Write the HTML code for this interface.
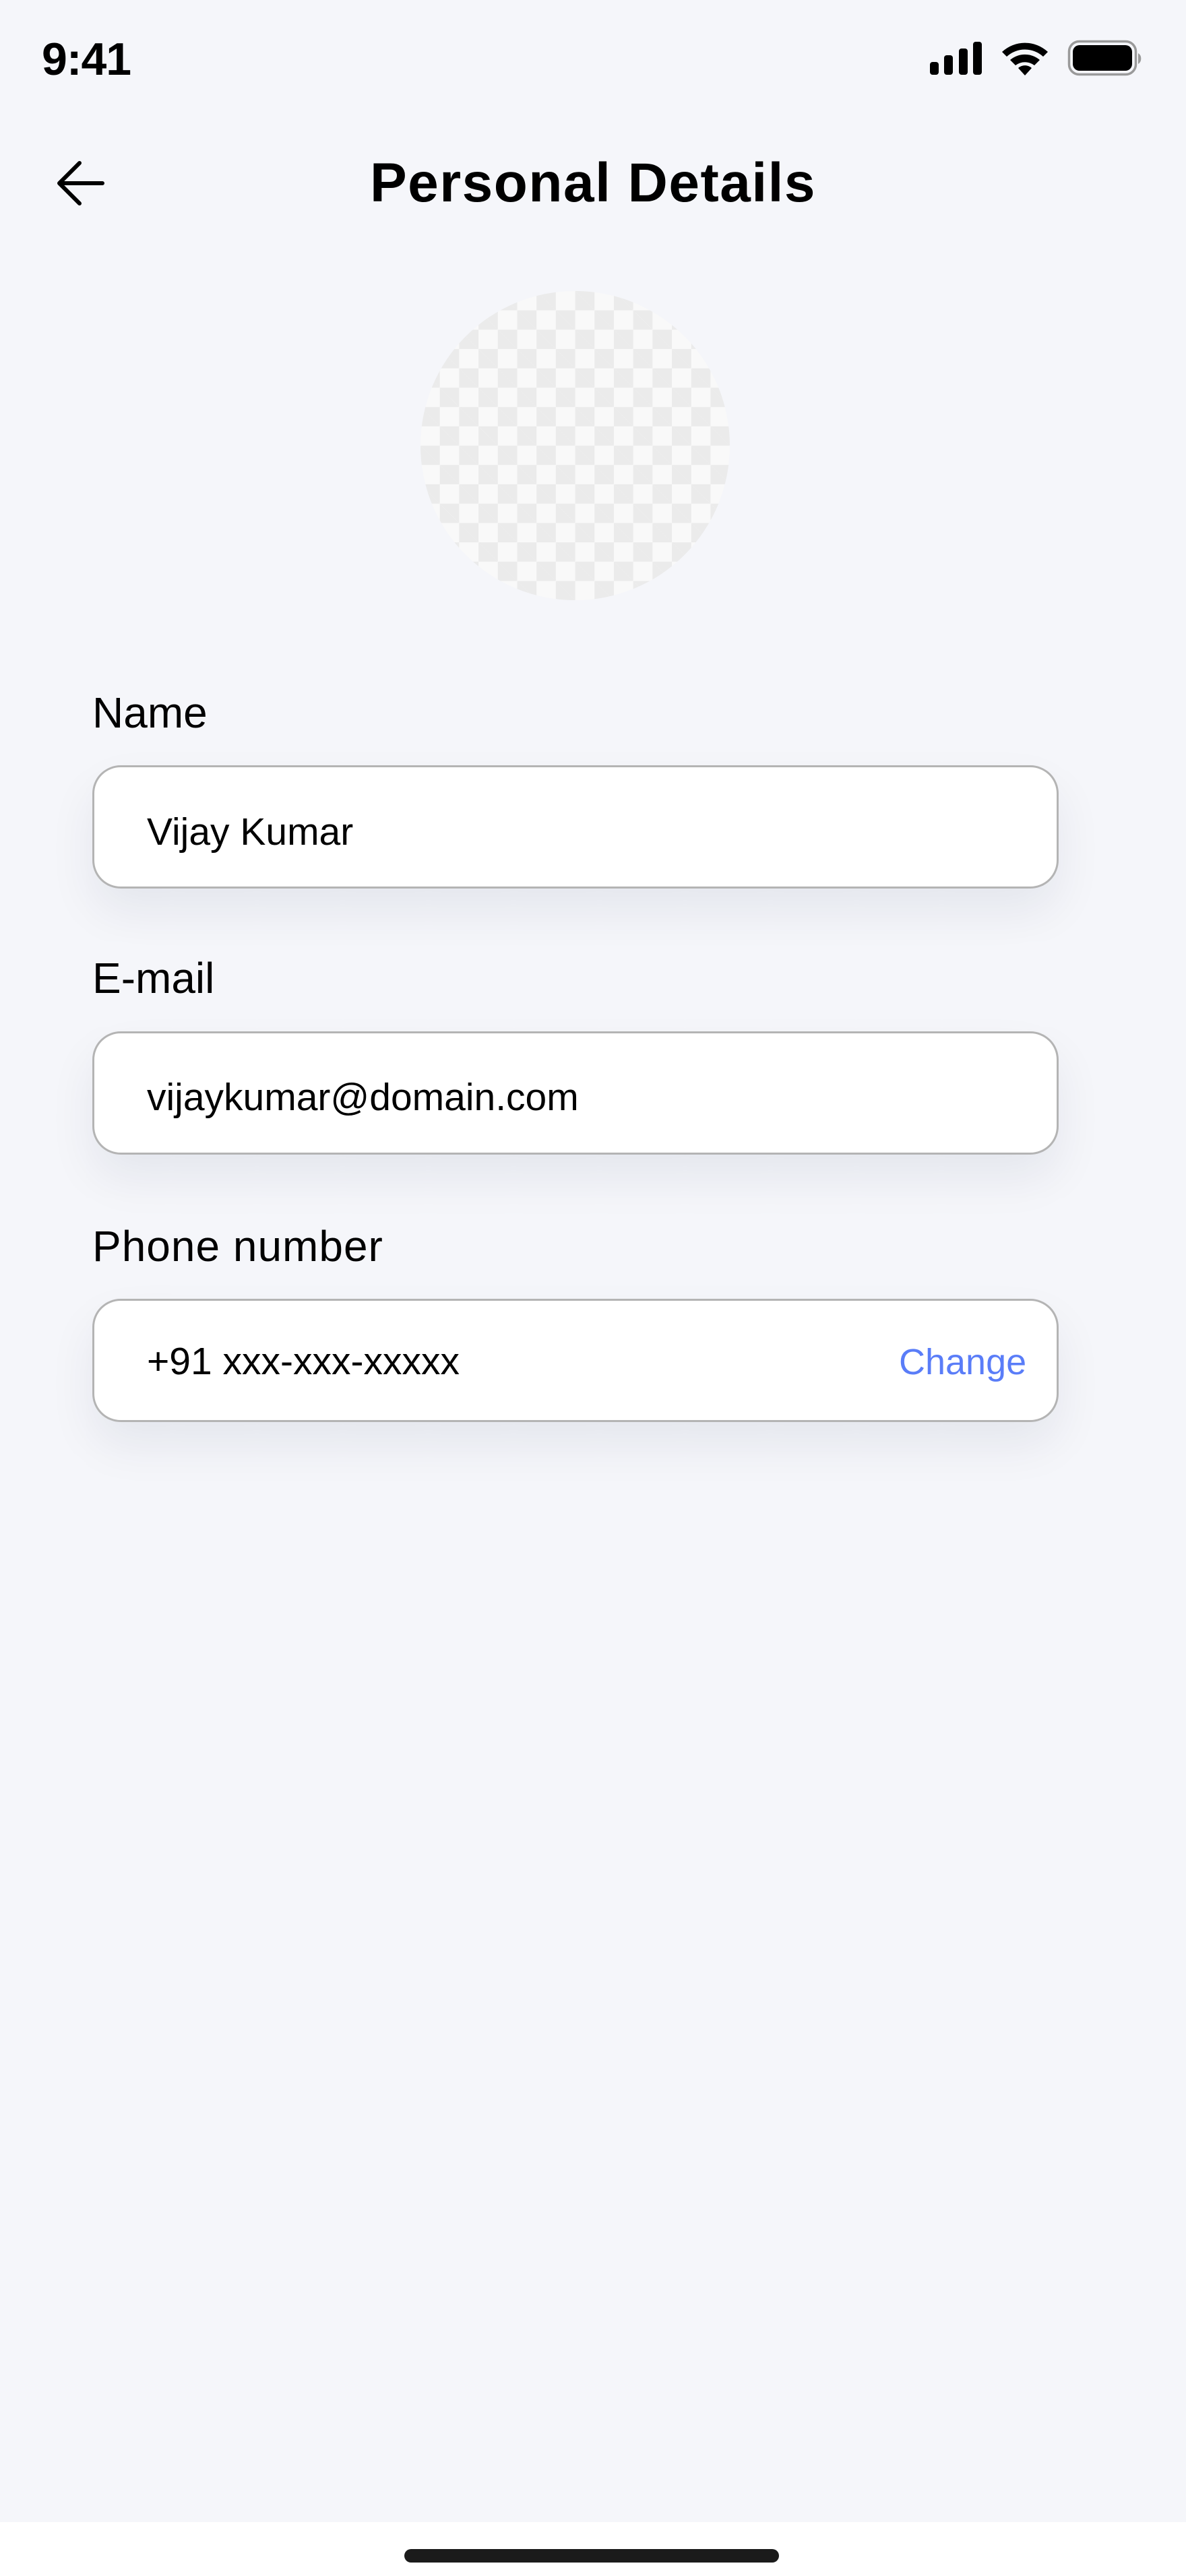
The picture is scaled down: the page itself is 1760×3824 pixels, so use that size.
<!DOCTYPE html>
<html><head><meta charset="utf-8"><style>
*{margin:0;padding:0;box-sizing:border-box}
html,body{width:1760px;height:3824px;overflow:hidden}
body{background:#f5f6fa;font-family:"Liberation Sans",sans-serif;color:#000;position:relative}
.a{position:absolute;line-height:1;white-space:nowrap}
.inp{position:absolute;left:137px;width:1434px;height:183px;background:#fff;border:3.5px solid #b4b4b4;border-radius:42px;box-shadow:0 34px 70px rgba(20,30,70,0.07)}
.lab{font-size:64px;left:137px}
.val{font-size:57px;left:218px}
.av{position:absolute;left:624px;top:432px;width:459px;height:459px;border-radius:50%;overflow:hidden;
background-color:#f9f9f9;
background-image:linear-gradient(45deg,#ebebeb 25%,transparent 25%,transparent 75%,#ebebeb 75%),linear-gradient(45deg,#ebebeb 25%,transparent 25%,transparent 75%,#ebebeb 75%);
background-size:57.4px 57.4px;background-position:28.7px 0,0 28.7px}
</style></head><body>
<div class="a" style="left:62px;top:54px;font-size:68px;font-weight:bold;letter-spacing:-1px">9:41</div>
<svg style="position:absolute;left:1375px;top:55px" width="330" height="65" viewBox="1375 55 330 65">
<rect x="1380" y="92" width="13" height="19" rx="4"/>
<rect x="1401" y="82" width="13" height="29" rx="4"/>
<rect x="1423" y="72" width="13" height="39" rx="4"/>
<rect x="1444" y="62" width="13" height="49" rx="4"/>
<path d="M1487 77 A50 50 0 0 1 1555 77 L1548 84 A40 40 0 0 0 1494 84 Z"/>
<path d="M1499 89 A34 34 0 0 1 1543 89 L1535 97 A23 23 0 0 0 1507 97 Z"/>
<path d="M1511 101 A15 15 0 0 1 1531 101 L1521 112 Z"/>
<rect x="1586.5" y="61.5" width="99" height="49" rx="15" fill="none" stroke="#9a9a9a" stroke-width="3.5"/>
<rect x="1592" y="67" width="88" height="38" rx="10"/>
<path d="M1689 79 A8 9 0 0 1 1689 95 Z" fill="#9a9a9a"/>
</svg>
<svg style="position:absolute;left:80px;top:236px" width="80" height="72" viewBox="80 236 80 72">
<path d="M152 272 H88 M118 242 L88 272 L118 302" fill="none" stroke="#000" stroke-width="6" stroke-linecap="round" stroke-linejoin="round"/>
</svg>
<div class="a" style="left:0;width:1760px;text-align:center;top:231px;font-size:82px;font-weight:bold;letter-spacing:1.5px">Personal Details</div>
<div class="av"></div>
<div class="a lab" style="top:1026px">Name</div>
<div class="inp" style="top:1136px"></div>
<div class="a val" style="top:1207px">Vijay Kumar</div>
<div class="a lab" style="top:1420px">E-mail</div>
<div class="inp" style="top:1531px"></div>
<div class="a val" style="top:1601px">vijaykumar@domain.com</div>
<div class="a lab" style="top:1818px;letter-spacing:1px">Phone number</div>
<div class="inp" style="top:1928px"></div>
<div class="a val" style="top:1993px">+91 xxx-xxx-xxxxx</div>
<div class="a" style="left:1334px;top:1995px;font-size:54px;color:#5a7df8">Change</div>
<div style="position:absolute;left:0;top:3744px;width:1760px;height:80px;background:#fff"></div>
<div style="position:absolute;left:600px;top:3784px;width:556px;height:20px;border-radius:10px;background:#1b1b1b"></div>
</body></html>
